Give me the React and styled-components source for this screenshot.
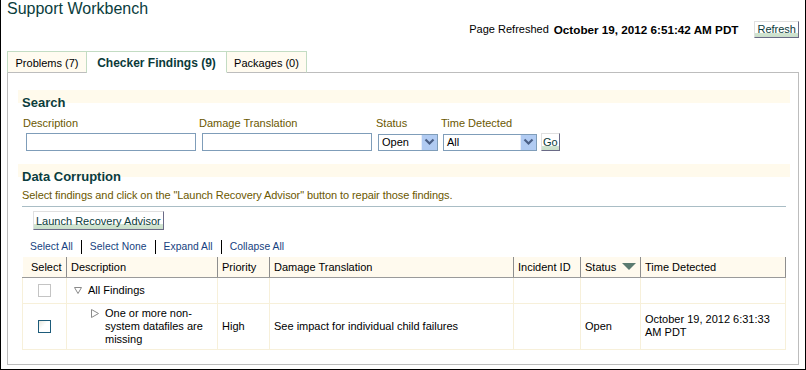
import React from "react";
import styled, { createGlobalStyle } from "styled-components";

const GlobalStyle = createGlobalStyle`
  html, body {
    margin: 0;
    padding: 0;
    background: #ffffff;
  }
  body {
    font-family: "Liberation Sans", Arial, sans-serif;
    font-size: 11px;
    color: #000000;
  }
`;

const Frame = styled.div`
  width: 806px;
  height: 370px;
  box-sizing: border-box;
  border-left: 1px solid #000;
  border-right: 1px solid #000;
  border-bottom: 1px solid #000;
  padding: 0 6px;
  display: flex;
  flex-direction: column;
  overflow: hidden;
`;

const Title = styled.div`
  font-size: 16px;
  line-height: 17px;
  color: #0a3d3d;
`;

const RefreshBar = styled.div`
  display: flex;
  justify-content: flex-end;
  align-items: center;
  gap: 5px;
  height: 20px;
  margin-top: 2px;
`;

const RefreshLabel = styled.span`
  font-size: 11px;
  color: #000;
`;

const RefreshDate = styled.span`
  font-size: 11.7px;
  font-weight: bold;
  color: #000;
  margin-right: 11px;
`;

const Button = styled.div`
  box-sizing: border-box;
  height: ${({ $h }) => $h || 17}px;
  padding: 0 ${({ $pad }) => ($pad === undefined ? 3 : $pad)}px;
  display: inline-flex;
  align-items: center;
  font-size: 11px;
  color: #0b3b3b;
  border: 1px solid;
  border-color: #e0e0e0 #6a6a86 #6a6a86 #e0e0e0;
  background: linear-gradient(to bottom, #ffffff 0, #ffffff 72%, #d3e5d3 72%, #c9dfc9 100%);
  white-space: nowrap;
`;

const TabRow = styled.div`
  display: flex;
  height: 22px;
  margin-top: 12px;
`;

const Tab = styled.div`
  box-sizing: border-box;
  height: 22px;
  width: ${({ $w }) => $w}px;
  display: flex;
  align-items: center;
  justify-content: center;
  font-size: ${({ $active }) => ($active ? 12 : 11)}px;
  font-weight: ${({ $active }) => ($active ? "bold" : "normal")};
  color: ${({ $active }) => ($active ? "#0b3a3a" : "#000")};
  background: ${({ $active }) => ($active ? "#ffffff" : "#fffbf0")};
  border: 1px solid #c3dcc3;
  border-bottom: 1px solid ${({ $active }) => ($active ? "#ffffff" : "#bdbdbd")};
  border-left-width: ${({ $noLeft }) => ($noLeft ? 0 : 1)}px;
  padding-top: 1px;
`;

const TabFill = styled.div`
  flex: 1;
  border-bottom: 1px solid #bdbdbd;
`;

const Panel = styled.div`
  flex: 1;
  margin-bottom: 4px;
  border: 1px solid #bdbdbd;
  border-top: none;
  padding: 17px 8px 0 10px;
  display: flex;
  flex-direction: column;
`;

const SectionHeader = styled.div`
  height: 20px;
  box-sizing: border-box;
  padding: 5px 0 0 4px;
  line-height: 15px;
  font-size: 13px;
  font-weight: bold;
  color: #0b3d3d;
  background: linear-gradient(to bottom, #fffaec 0, #fffaec 13px, transparent 13px);
  margin-top: ${({ $mt }) => $mt || 0}px;
`;

const FieldRow = styled.div`
  display: flex;
  align-items: flex-end;
  padding-left: 5px;
  margin-top: 7px;
`;

const Field = styled.div`
  display: flex;
  flex-direction: column;
  margin-right: ${({ $mr }) => $mr}px;
`;

const Label = styled.div`
  line-height: 13px;
  height: 13px;
  color: #6b5800;
  font-size: 11px;
  margin-bottom: 3px;
  white-space: nowrap;
`;

const ControlSlot = styled.div`
  height: 18px;
  display: flex;
  align-items: center;
  padding-left: ${({ $pl }) => $pl}px;
`;

const TextBox = styled.div`
  box-sizing: border-box;
  width: 170px;
  height: 18px;
  border: 1px solid #7f9db9;
  background: #fff;
`;

const SelectBox = styled.div`
  box-sizing: border-box;
  width: ${({ $w }) => $w}px;
  height: 17px;
  border: 1px solid #7f9db9;
  background: #fff;
  display: flex;
  align-items: center;
  justify-content: space-between;
  padding-left: 3px;
  font-size: 11px;
`;

const ArrowButton = styled.div`
  width: 15px;
  height: 15px;
  background: #b1cbf2;
  display: flex;
  align-items: center;
  justify-content: center;
  border-left: 1px solid #e8eefa;
`;

const Hint = styled.div`
  margin-top: 5px;
  padding-left: 4px;
  line-height: 13px;
  color: #6b5800;
  font-size: 11px;
  letter-spacing: -0.08px;
`;

const Rule = styled.div`
  height: 1px;
  margin: 4px 4px 0 4px;
  background: #a9bdc5;
`;

const ButtonRow = styled.div`
  display: flex;
  margin: 4px 0 0 15px;
`;

const LinkRow = styled.div`
  display: flex;
  align-items: center;
  margin: 10px 0 0 12px;
  height: 13px;
`;

const Link = styled.span`
  color: #163f80;
  font-size: 10.3px;
  line-height: 13px;
  letter-spacing: 0.05px;
`;

const LinkSep = styled.span`
  width: 1px;
  height: 14px;
  background: #000;
  margin: 0 8px;
`;

const Table = styled.table`
  margin: 4px 0 0 4px;
  width: 763px;
  border-collapse: collapse;
  table-layout: fixed;
`;

const HeadCell = styled.th`
  box-sizing: border-box;
  height: 20px;
  padding: 0 0 0 4px;
  text-align: ${({ $center }) => ($center ? "center" : "left")};
  font-weight: normal;
  font-size: 11px;
  color: #000;
  background: #fffaee;
  border-left: 1px solid #8e8e8e;
  border-right: 1px solid #8e8e8e;
  border-bottom: 1px solid #9a9a9a;
  white-space: nowrap;
  &:first-child {
    border-left: none;
  }
`;

const Cell = styled.td`
  box-sizing: border-box;
  height: ${({ $h }) => $h}px;
  padding: 0 4px;
  vertical-align: middle;
  font-size: 11px;
  line-height: 13px;
  border: 1px solid #f7f0da;
  text-align: ${({ $center }) => ($center ? "center" : "left")};
`;

const Check = styled.div`
  display: inline-block;
  box-sizing: border-box;
  width: 13px;
  height: 13px;
  vertical-align: middle;
  border: 1px solid ${({ $on }) => ($on ? "#1d5b7a" : "#c4c4c4")};
  background: ${({ $on }) =>
    $on ? "linear-gradient(135deg, #e6e6dc 0, #ffffff 45%)" : "#ffffff"};
`;

const TreeLine = styled.div`
  display: flex;
  align-items: ${({ $top }) => ($top ? "flex-start" : "center")};
  gap: 6px;
  padding-left: ${({ $indent }) => $indent}px;
`;

const TreeIcon = styled.span`
  display: inline-flex;
  flex: none;
  margin-top: ${({ $mt }) => $mt || 0}px;
`;

const SortHead = styled.span`
  display: inline-flex;
  align-items: center;
  gap: 6px;
`;

const Chevron = () => (
  <svg width="11" height="8" viewBox="0 0 11 8">
    <path d="M1.5 1.5 L5.5 5.5 L9.5 1.5" fill="none" stroke="#4a5f86" strokeWidth="2.2" />
  </svg>
);

const Select = ({ width, value }) => (
  <SelectBox $w={width}>
    <span>{value}</span>
    <ArrowButton>
      <Chevron />
    </ArrowButton>
  </SelectBox>
);

const DownOutline = () => (
  <svg width="8" height="7" viewBox="0 0 8 7">
    <path d="M0.5 0.5 H7.5 L4 6.5 Z" fill="none" stroke="#8a8a8a" strokeWidth="1" />
  </svg>
);

const RightOutline = () => (
  <svg width="8" height="9" viewBox="0 0 8 9">
    <path d="M0.5 0.5 V8.5 L7.5 4.5 Z" fill="none" stroke="#8a8a8a" strokeWidth="1" />
  </svg>
);

const SortDown = () => (
  <svg width="14" height="7" viewBox="0 0 14 7">
    <path d="M0 0 H14 L7 7 Z" fill="#5b7b70" />
  </svg>
);

const columns = [
  { key: "select", label: "Select", width: 44, center: true },
  { key: "desc", label: "Description", width: 151 },
  { key: "priority", label: "Priority", width: 52 },
  { key: "damage", label: "Damage Translation", width: 244 },
  { key: "incident", label: "Incident ID", width: 67 },
  { key: "status", label: "Status", width: 60, sorted: true },
  { key: "time", label: "Time Detected", width: 145 },
];

const App = () => {
  return (
    <>
      <GlobalStyle />
      <Frame>
        <Title>Support Workbench</Title>
        <RefreshBar>
          <RefreshLabel>Page Refreshed</RefreshLabel>
          <RefreshDate>October 19, 2012 6:51:42 AM PDT</RefreshDate>
          <Button $h={17} $pad={2}>Refresh</Button>
        </RefreshBar>

        <TabRow>
          <Tab $w={80}>Problems (7)</Tab>
          <Tab $w={140} $active $noLeft>Checker Findings (9)</Tab>
          <Tab $w={80} $noLeft>Packages (0)</Tab>
          <TabFill />
        </TabRow>

        <Panel>
          <SectionHeader>Search</SectionHeader>
          <FieldRow>
            <Field $mr={3}>
              <Label>Description</Label>
              <ControlSlot $pl={3}>
                <TextBox />
              </ControlSlot>
            </Field>
            <Field $mr={4}>
              <Label>Damage Translation</Label>
              <ControlSlot $pl={3}>
                <TextBox />
              </ControlSlot>
            </Field>
            <Field $mr={3}>
              <Label>Status</Label>
              <ControlSlot $pl={2}>
                <Select width={60} value="Open" />
              </ControlSlot>
            </Field>
            <Field $mr={4}>
              <Label>Time Detected</Label>
              <ControlSlot $pl={2}>
                <Select width={94} value="All" />
              </ControlSlot>
            </Field>
            <Field $mr={0}>
              <ControlSlot $pl={0}>
                <Button $h={18} $pad={1}>Go</Button>
              </ControlSlot>
            </Field>
          </FieldRow>

          <SectionHeader $mt={13}>Data Corruption</SectionHeader>
          <Hint>
            Select findings and click on the "Launch Recovery Advisor" button to repair those findings.
          </Hint>
          <Rule />
          <ButtonRow>
            <Button $h={19} $pad={2}>Launch Recovery Advisor</Button>
          </ButtonRow>

          <LinkRow>
            <Link>Select All</Link>
            <LinkSep />
            <Link>Select None</Link>
            <LinkSep />
            <Link>Expand All</Link>
            <LinkSep />
            <Link>Collapse All</Link>
          </LinkRow>

          <Table>
            <colgroup>
              {columns.map((c) => (
                <col key={c.key} style={{ width: c.width }} />
              ))}
            </colgroup>
            <thead>
              <tr>
                {columns.map((c) => (
                  <HeadCell key={c.key} $center={c.center}>
                    {c.sorted ? (
                      <SortHead>
                        {c.label}
                        <SortDown />
                      </SortHead>
                    ) : (
                      c.label
                    )}
                  </HeadCell>
                ))}
              </tr>
            </thead>
            <tbody>
              <tr>
                <Cell $h={26} $center>
                  <Check />
                </Cell>
                <Cell $h={26}>
                  <TreeLine $indent={3}>
                    <TreeIcon>
                      <DownOutline />
                    </TreeIcon>
                    All Findings
                  </TreeLine>
                </Cell>
                <Cell $h={26} />
                <Cell $h={26} />
                <Cell $h={26} />
                <Cell $h={26} />
                <Cell $h={26} />
              </tr>
              <tr>
                <Cell $h={46} $center>
                  <Check $on />
                </Cell>
                <Cell $h={46}>
                  <TreeLine $indent={20} $top>
                    <TreeIcon $mt={2}>
                      <RightOutline />
                    </TreeIcon>
                    <span>One or more non-system datafiles are missing</span>
                  </TreeLine>
                </Cell>
                <Cell $h={46}>High</Cell>
                <Cell $h={46}>See impact for individual child failures</Cell>
                <Cell $h={46} />
                <Cell $h={46}>Open</Cell>
                <Cell $h={46}>October 19, 2012 6:31:33 AM PDT</Cell>
              </tr>
            </tbody>
          </Table>
        </Panel>
      </Frame>
    </>
  );
};

export default App;
